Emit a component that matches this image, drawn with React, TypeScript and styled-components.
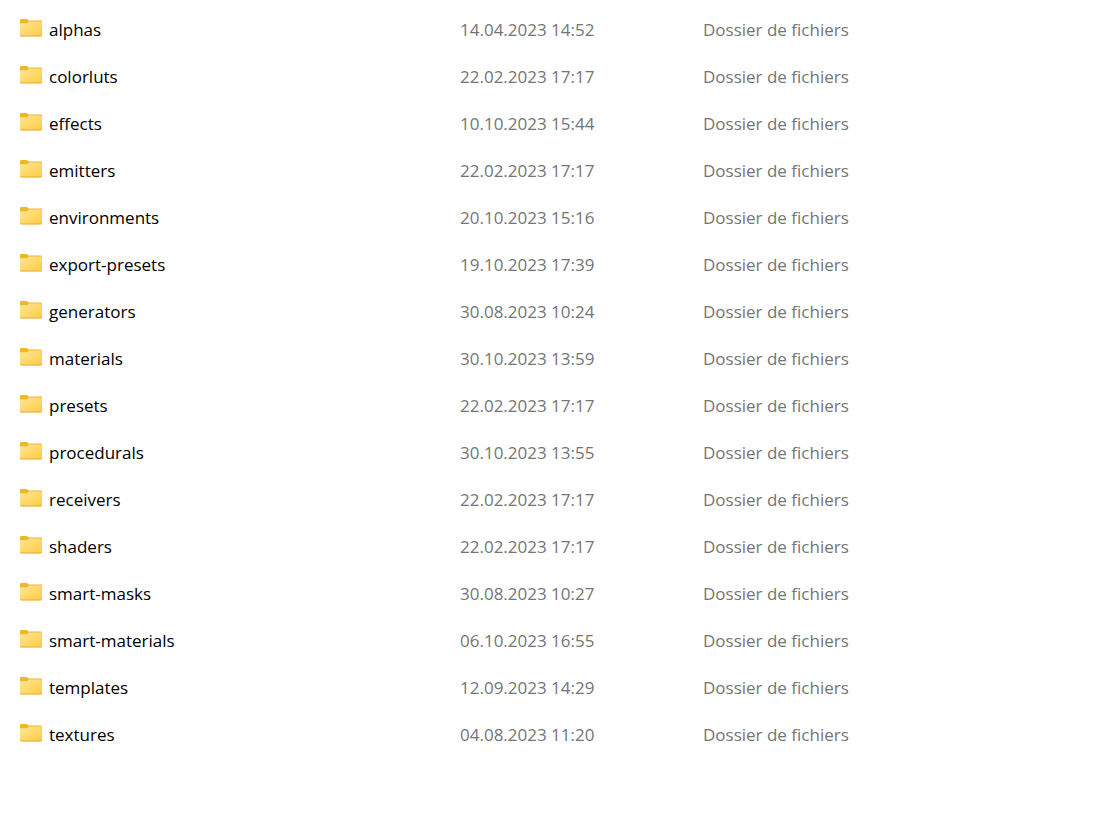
import React from "react";
import styled, { createGlobalStyle } from "styled-components";

const GlobalStyle = createGlobalStyle`
  body {
    margin: 0;
    background: #ffffff;
    font-family: "Segoe UI", "Open Sans", "Noto Sans", sans-serif;
    font-size: 17px;
    line-height: 24px;
  }
`;

const Listing = styled.main`
  padding: 6px 20px 0;
`;

const FileTable = styled.table`
  width: 100%;
  table-layout: fixed;
  border-collapse: collapse;
`;

const Column = styled.col<{ $width?: number }>`
  width: ${({ $width }) => ($width ? `${$width}px` : "auto")};
`;

const Row = styled.tr`
  height: 47px;
`;

const Cell = styled.td`
  padding: 0;
  color: #757575;
  vertical-align: middle;
  white-space: nowrap;
`;

const NameCell = styled.th`
  padding: 0;
  color: #000000;
  font-weight: 400;
  text-align: left;
  vertical-align: middle;
`;

const Name = styled.span`
  display: flex;
  align-items: center;
  gap: 7px;
`;

const Icon = styled.svg`
  flex: none;
  margin-bottom: 4px;
`;

function FolderIcon() {
  return (
    <Icon width="22" height="18" viewBox="0 0 22 18" aria-hidden="true">
      <path d="M0 1.2Q0 0 1.2 0H6.4Q7 0 7.5.5L8.6 1.6H21Q22 1.6 22 2.6V8H0Z" fill="#efb728" />
      <path d="M0 5Q0 4.2 1 4.2H6.8Q7.5 4.2 8 3.5L8.8 2.6H21.2Q22 2.6 22 3.4V16.2Q22 17.2 21 17.2H1Q0 17.2 0 16.2Z" fill="url(#folderFront)" />
      <path d="M0 15.8Q0 17.4 1 17.4H21Q22 17.4 22 15.8Q22 16.6 21 16.6H1Q0 16.6 0 15.8Z" fill="#e3ab35" />
    </Icon>
  );
}

const folders = [
  ["alphas", "14.04.2023 14:52"],
  ["colorluts", "22.02.2023 17:17"],
  ["effects", "10.10.2023 15:44"],
  ["emitters", "22.02.2023 17:17"],
  ["environments", "20.10.2023 15:16"],
  ["export-presets", "19.10.2023 17:39"],
  ["generators", "30.08.2023 10:24"],
  ["materials", "30.10.2023 13:59"],
  ["presets", "22.02.2023 17:17"],
  ["procedurals", "30.10.2023 13:55"],
  ["receivers", "22.02.2023 17:17"],
  ["shaders", "22.02.2023 17:17"],
  ["smart-masks", "30.08.2023 10:27"],
  ["smart-materials", "06.10.2023 16:55"],
  ["templates", "12.09.2023 14:29"],
  ["textures", "04.08.2023 11:20"],
];

export default function App() {
  return (
    <Listing>
      <GlobalStyle />
      <svg width="0" height="0" display="block" aria-hidden="true">
        <defs>
          <linearGradient id="folderFront" x1="0" y1="0" x2="1" y2="1">
            <stop offset="0" stopColor="#ffe69a" />
            <stop offset="1" stopColor="#ffcb40" />
          </linearGradient>
        </defs>
      </svg>
      <FileTable>
        <colgroup>
          <Column $width={440} />
          <Column $width={243} />
          <Column />
        </colgroup>
        <tbody>
          {folders.map(([name, modified]) => (
            <Row key={name}>
              <NameCell scope="row">
                <Name>
                  <FolderIcon />
                  {name}
                </Name>
              </NameCell>
              <Cell>{modified}</Cell>
              <Cell>Dossier de fichiers</Cell>
            </Row>
          ))}
        </tbody>
      </FileTable>
    </Listing>
  );
}
